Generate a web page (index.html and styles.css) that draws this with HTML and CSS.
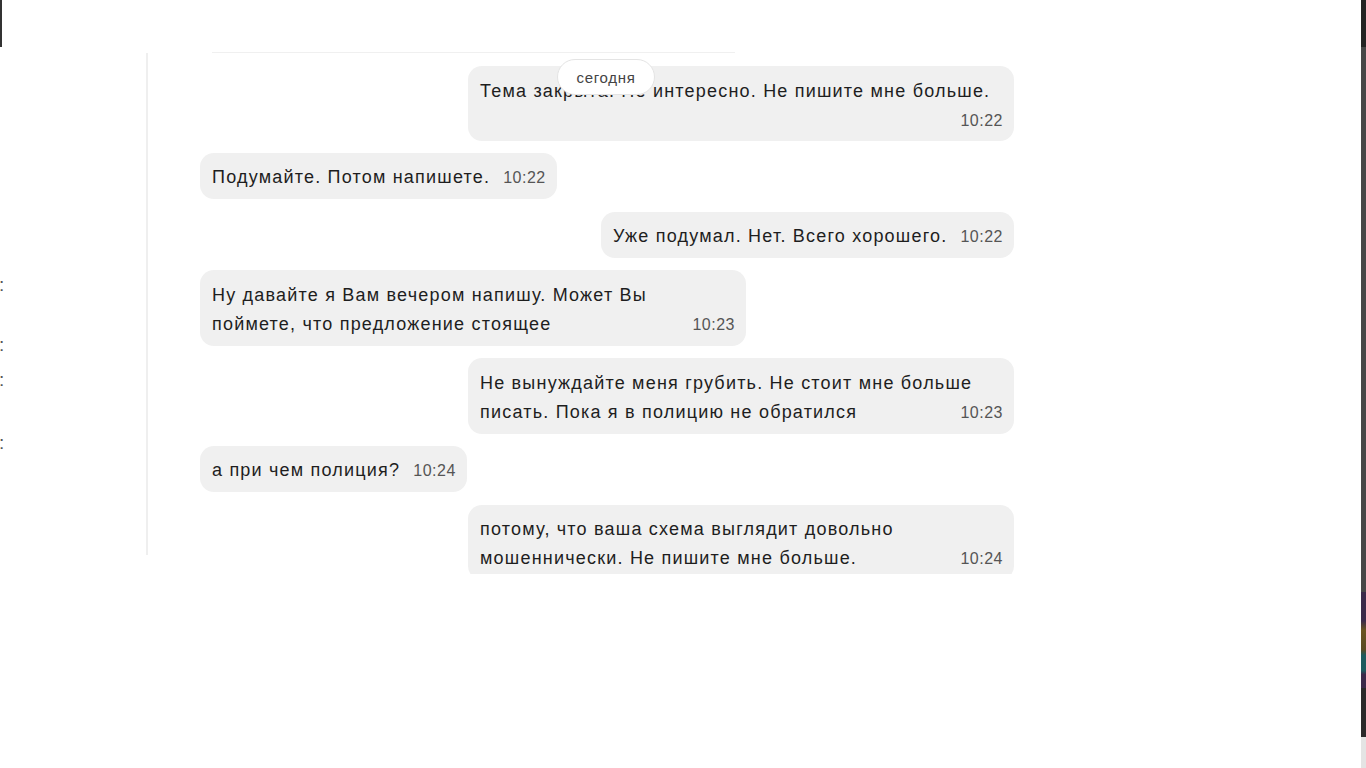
FILE: index.html
```html
<!DOCTYPE html>
<html lang="ru">
<head>
<meta charset="utf-8">
<title>Чат</title>
<link rel="stylesheet" href="styles.css">
</head>
<body>
<div class="screen">
  <aside class="left-edge">
    <div class="edge-bar"></div>
    <span class="edge-mark m1">:</span>
    <span class="edge-mark m2">:</span>
    <span class="edge-mark m3">:</span>
    <span class="edge-mark m4">:</span>
  </aside>
  <main class="chat">
    <div class="rail"></div>
    <section class="thread">
      <div class="top-line"></div>
      <div class="messages">
        <div class="msg out"><div class="bubble">Тема закрыта. Не интересно. Не пишите мне больше.<span class="time">10:22</span></div></div>
        <div class="msg in"><div class="bubble">Подумайте. Потом напишете.<span class="time">10:22</span></div></div>
        <div class="msg out"><div class="bubble">Уже подумал. Нет. Всего хорошего.<span class="time">10:22</span></div></div>
        <div class="msg in"><div class="bubble">Ну давайте я Вам вечером напишу. Может Вы поймете, что предложение стоящее<span class="time">10:23</span></div></div>
        <div class="msg out"><div class="bubble">Не вынуждайте меня грубить. Не стоит мне больше писать. Пока я в полицию не обратился<span class="time">10:23</span></div></div>
        <div class="msg in"><div class="bubble">а при чем полиция?<span class="time">10:24</span></div></div>
        <div class="msg out"><div class="bubble">потому, что ваша схема выглядит довольно мошеннически. Не пишите мне больше.<span class="time">10:24</span></div></div>
      </div>
      <div class="date-pill">сегодня</div>
    </section>
  </main>
  <aside class="right-edge">
    <div class="re-top"></div>
    <div class="re-mid"></div>
    <div class="re-img"></div>
    <div class="re-dark"></div>
    <div class="re-light"></div>
  </aside>
</div>
</body>
</html>
```

FILE: styles.css
```css
* { box-sizing: border-box; margin: 0; padding: 0; }
html, body { height: 100%; }
body {
  background: #fff;
  font-family: "Liberation Sans", Arial, sans-serif;
  overflow: hidden;
}
.screen { display: flex; width: 1366px; height: 768px; }

.left-edge {
  width: 146px; flex: none;
  display: flex; flex-direction: column; align-items: flex-start;
  overflow: hidden;
}
.edge-bar { width: 2px; height: 47px; background: #333; flex: none; }
.edge-mark {
  display: block; height: 20px; font-size: 19px; line-height: 20px;
  color: #555; margin-left: -1px; flex: none;
}
.m1 { margin-top: 228px; }
.m2 { margin-top: 40px; }
.m3 { margin-top: 15px; }
.m4 { margin-top: 43px; }

.chat { flex: 1; min-width: 0; display: flex; align-items: flex-start; padding-top: 52px; }
.rail { width: 2px; height: 502px; margin-top: 1px; background: #efefef; flex: none; }
.thread { position: relative; width: 868px; flex: none; }
.top-line { height: 1px; width: 523px; margin-left: 64px; background: #f0f0f0; }
.messages {
  height: 521px; overflow: hidden;
  padding: 13px 0 0 52px;
  display: flex; flex-direction: column; gap: 12.3px;
}
.msg { display: flex; width: 814px; flex: none; }
.msg.out { justify-content: flex-end; }
.msg.in { justify-content: flex-start; }
.bubble {
  display: flow-root;
  max-width: 546px;
  background: #f0f0f0;
  border-radius: 14px;
  padding: 10.5px 11px 7px 12px;
  font-size: 18px; line-height: 29px;
  letter-spacing: 1.2px;
  color: #1e1e1e;
}
.time {
  float: right; margin-left: 13px;
  font-size: 16px; line-height: 26px; padding-top: 2px;
  letter-spacing: 0.5px;
  color: #555;
}
.date-pill {
  position: absolute; top: 7px; left: 409px;
  width: 98px; height: 36px;
  border: 1px solid #e4e4e4; border-radius: 18px;
  background: #fff; color: #444;
  font-size: 15px; letter-spacing: 0.7px;
  display: flex; align-items: center; justify-content: center;
}

.right-edge {
  width: 5px; min-width: 5px; flex: 0 0 5px;
  background: #474747;
  display: flex; flex-direction: column;
}
.right-edge > div { width: 5px; flex: none; }
.re-top { height: 47px; background: #232323; }
.re-mid { height: 545px; background: #474747; }
.re-img { height: 96px; background: linear-gradient(#3b2a4a 0%, #3b2a4a 30%, #6a5420 40%, #5a4a22 60%, #1e5a5e 66%, #1e5a5e 82%, #3b2a4a 86%, #3b2a4a 100%); }
.re-dark { height: 49px; background: #2a2a2a; }
.re-light { height: 31px; background: #e4e4e4; }
```
